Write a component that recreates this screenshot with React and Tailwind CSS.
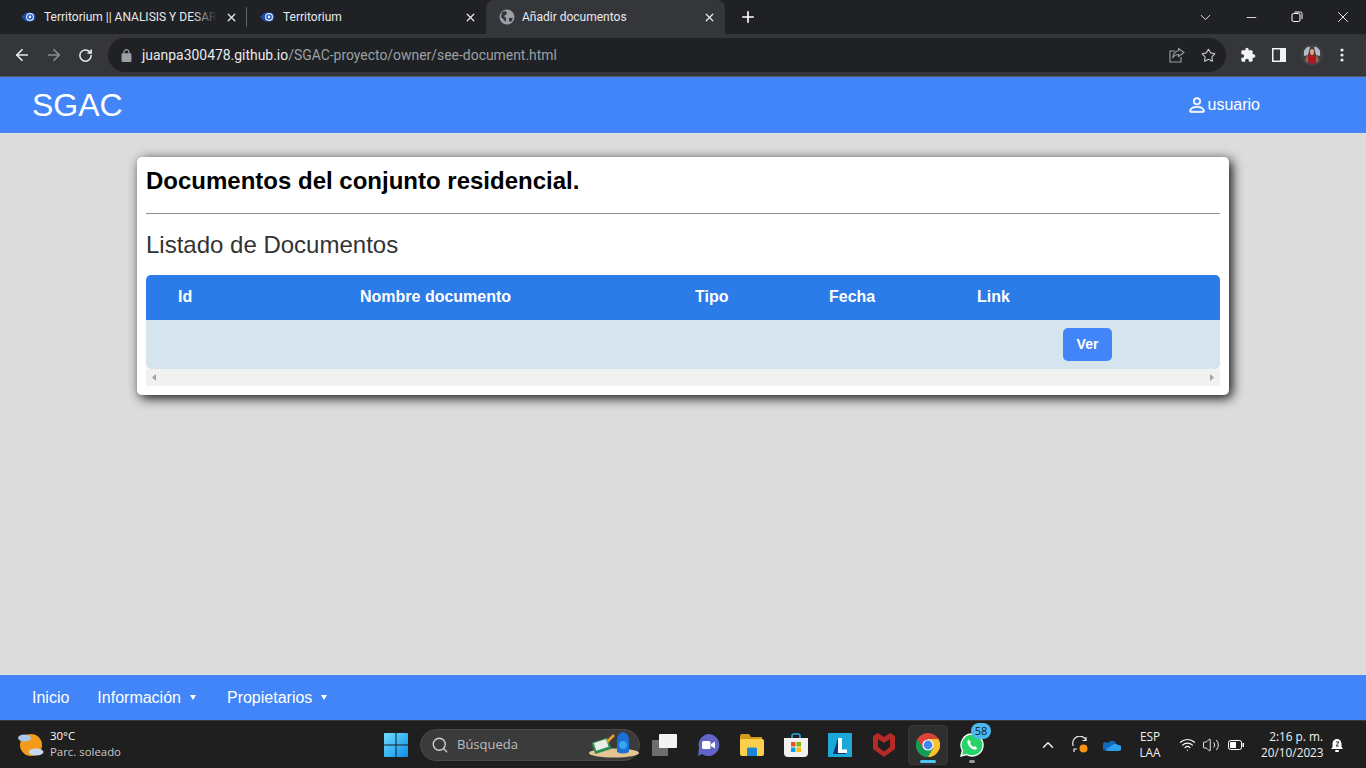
import React from "react";
import { ArrowLeft, ArrowRight, RotateCw, Star, ChevronDown, ChevronUp, Minus, X, Plus, Search, Wifi, Volume2 } from "lucide-react";
import { BsPerson } from "react-icons/bs";

const Favicon = () => (
  <svg width="16" height="16" viewBox="0 0 16 16" className="shrink-0">
    <path d="M0 8 L5 3.5 H10 A4.5 4.5 0 0 1 10 12.5 H5 Z" fill="#1a4fb0" />
    <circle cx="9" cy="8" r="4" fill="#dfeaff" />
    <circle cx="9" cy="8" r="2.8" fill="#1a4fb0" />
    <circle cx="9" cy="8" r="1.4" fill="#dfeaff" />
  </svg>
);

const Globe = () => (
  <svg width="16" height="16" viewBox="0 0 16 16" className="shrink-0">
    <circle cx="8" cy="8" r="7.5" fill="#9aa0a6" />
    <path d="M3 3 L7 2 L8 5 L5 7 L7 9 L7 13 L5 11 L2 8 Z M10 9 L14 9 L12 13 L10 12 Z" fill="#35363a" />
  </svg>
);

const Tab = ({ title, active, icon, fade, divider }) => (
  <div
    className={`relative flex items-center h-[34px] w-[239px] pl-[13px] pr-[9px] ${active ? "bg-[#35363a] rounded-t-lg" : ""}`}
  >
    {icon}
    <span className="relative ml-[7px] flex-1 overflow-hidden whitespace-nowrap text-[12px] text-[#e8eaed]">
      {title}
      {fade && <span className="absolute right-0 top-0 h-full w-6 bg-gradient-to-r from-transparent to-[#202124]" />}
    </span>
    <X size={13} strokeWidth={2.4} className="text-[#e8eaed] ml-2 shrink-0" />
    {divider && <span className="absolute right-0 top-[7px] h-[20px] w-px bg-[#5f6368]" />}
  </div>
);

const TabBar = () => (
  <div className="flex h-[34px] bg-[#202124] pl-[8px]">
    <Tab title="Territorium || ANALISIS Y DESARROLLO" icon={<Favicon />} fade divider />
    <Tab title="Territorium" icon={<Favicon />} />
    <Tab title="Añadir documentos" icon={<Globe />} active />
    <div className="flex items-center ml-[14px]">
      <Plus size={18} strokeWidth={2.2} className="text-white" />
    </div>
    <div className="ml-auto flex items-center text-white">
      <div className="w-[46px] flex justify-center"><ChevronDown size={17} strokeWidth={1.2} /></div>
      <div className="w-[46px] flex justify-center"><Minus size={15} strokeWidth={1.3} /></div>
      <div className="w-[46px] flex justify-center">
        <svg width="12" height="12" viewBox="0 0 12 12" fill="none" stroke="currentColor">
          <rect x="1" y="2.5" width="8" height="8" rx="1.5" />
          <path d="M3.5 1 H9.5 A1.5 1.5 0 0 1 11 2.5 V8" />
        </svg>
      </div>
      <div className="w-[46px] flex justify-center"><X size={18} strokeWidth={1.2} /></div>
    </div>
  </div>
);

const AddressBar = () => (
  <div className="flex items-center h-[42px] bg-[#35363a] border-b border-[#55585c] box-content">
    <div className="w-[108px] flex items-center pl-[13px] gap-[14px] shrink-0">
      <ArrowLeft size={18} strokeWidth={2.3} className="text-[#e8eaed]" />
      <ArrowRight size={18} strokeWidth={2.3} className="text-[#8a8d91]" />
      <RotateCw size={15} strokeWidth={2.4} className="text-[#e8eaed] ml-[1px]" />
    </div>
    <div className="flex items-center h-[34px] w-[1118px] rounded-full bg-[#202124] pl-[13px] pr-[10px]">
      <svg width="11" height="13" viewBox="4 1 16 21" fill="#9aa0a6" className="shrink-0">
        <path d="M18 8h-1V6c0-2.76-2.24-5-5-5S7 3.24 7 6v2H6c-1.1 0-2 .9-2 2v10c0 1.1.9 2 2 2h12c1.1 0 2-.9 2-2V10c0-1.1-.9-2-2-2zM9 6c0-1.66 1.34-3 3-3s3 1.34 3 3v2H9V6z" />
      </svg>
      <span className="ml-[10px] text-[13.93px] text-[#e8eaed] whitespace-nowrap">
        juanpa300478.github.io<span className="text-[#9aa0a6]">/SGAC-proyecto/owner/see-document.html</span>
      </span>
      <div className="ml-auto flex items-center gap-[16px] text-[#c4c7c5]">
        <svg width="16" height="16" viewBox="0 0 16 16" fill="none" stroke="#9aa0a6" strokeWidth="1.1">
          <path d="M6 4 H1 V15 H12 V10" />
          <path d="M9.5 1.5 L15 5.5 L9.5 9.5 V7.5 C7 7.5 5 8.5 3.8 11 C4 7.5 6 4.5 9.5 3.8 Z" />
        </svg>
        <Star size={15} strokeWidth={1.8} />
      </div>
    </div>
    <div className="flex items-center pl-[14px] text-white">
      <svg width="16" height="16" viewBox="0 0 24 24" fill="#f1f3f4">
        <path d="M20.5 11H19V7c0-1.1-.9-2-2-2h-4V3.5C13 2.12 11.88 1 10.5 1S8 2.12 8 3.5V5H4c-1.1 0-1.99.9-1.99 2v3.8H3.5c1.49 0 2.7 1.21 2.7 2.7s-1.21 2.7-2.7 2.7H2V20c0 1.1.9 2 2 2h3.8v-1.5c0-1.49 1.21-2.7 2.7-2.7 1.49 0 2.7 1.21 2.7 2.7V22H17c1.1 0 2-.9 2-2v-4h1.5c1.38 0 2.5-1.12 2.5-2.5S21.88 11 20.5 11z" />
      </svg>
      <svg width="14" height="14" viewBox="0 0 14 14" className="ml-[16px]">
        <rect width="14" height="14" fill="#f1f3f4" />
        <rect x="1.5" y="1.5" width="6.5" height="11" fill="#35363a" />
      </svg>
      <svg width="22" height="22" viewBox="0 0 22 22" className="ml-[15px]">
        <circle cx="11" cy="11" r="11" fill="#3f3f46" />
        <path d="M3 7 Q6 2 9 3 L7 11 L3 12 Z M19 7 Q16 2 13 3 L15 11 L19 12 Z" fill="#b9bcc4" />
        <path d="M7.5 10 L11 12 L14.5 10 L15 17 L11 21 L7 17 Z" fill="#b3141f" />
        <path d="M5 13 L7 11 L7 19 L4 17 Z M17 13 L15 11 L15 19 L18 17 Z" fill="#8a6a4a" />
        <ellipse cx="11" cy="8" rx="2" ry="3" fill="#d9a77f" />
      </svg>
      <svg width="4" height="14" viewBox="0 0 4 14" fill="#e8eaed" className="ml-[17px]">
        <circle cx="2" cy="2" r="1.6" />
        <circle cx="2" cy="7" r="1.6" />
        <circle cx="2" cy="12" r="1.6" />
      </svg>
    </div>
  </div>
);

const Caret = () => (
  <svg width="6" height="5" viewBox="0 0 6 5" fill="white" className="ml-[9px]">
    <path d="M0 0 H6 L3 5 Z" />
  </svg>
);

const DocumentsCard = () => (
  <div className="mx-[137px] mt-[24px] bg-white rounded-[5px] px-[9px] pt-[9px] pb-[9px] shadow-[3px_3px_12px_rgba(0,0,0,0.95)]">
    <h1 className="text-[24px] leading-[30px] font-bold text-black">Documentos del conjunto residencial.</h1>
    <hr className="mt-[17px] border-t border-[#8f8f8f]" />
    <h2 className="mt-[17px] text-[24px] leading-[28px] text-[#333333]">Listado de Documentos</h2>
    <div className="mt-[16px]">
      <div className="grid grid-cols-[182px_335px_134px_148px_1fr] h-[45px] pb-[2px] items-center bg-[#2b7be8] rounded-t-[5px] text-white text-[16px] font-bold">
        <div className="pl-8">Id</div>
        <div className="pl-8">Nombre documento</div>
        <div className="pl-8">Tipo</div>
        <div className="pl-8">Fecha</div>
        <div className="pl-8">Link</div>
      </div>
      <div className="grid grid-cols-[182px_335px_134px_148px_1fr] h-[49px] items-center bg-[#d6e4ee] rounded-b-[5px]">
        <div />
        <div />
        <div />
        <div />
        <div className="pl-[118px]">
          <button className="h-[33px] w-[49px] rounded-[5px] bg-[#4285f8] text-white text-[14px] font-bold">Ver</button>
        </div>
      </div>
      <div className="flex items-center justify-between h-[17px] bg-[#f1f1f1] px-[6px]">
        <svg width="4" height="7" viewBox="0 0 4 7" fill="#a3a3a3"><path d="M4 0 V7 L0 3.5 Z" /></svg>
        <svg width="4" height="7" viewBox="0 0 4 7" fill="#a3a3a3"><path d="M0 0 V7 L4 3.5 Z" /></svg>
      </div>
    </div>
  </div>
);

const Cell = ({ children, className = "" }) => (
  <div className={`w-[44px] h-[40px] flex items-center justify-center shrink-0 ${className}`}>{children}</div>
);

const TaskbarApps = () => (
  <div className="flex items-center">
    <Cell>
      <svg width="24" height="24" viewBox="0 0 24 24">
        <defs>
          <linearGradient id="win" x1="0" y1="0" x2="1" y2="1">
            <stop offset="0" stopColor="#6fdcff" />
            <stop offset="1" stopColor="#0a8fe8" />
          </linearGradient>
        </defs>
        <path d="M0 1 A1 1 0 0 1 1 0 H11.5 V11.5 H0 Z M12.5 0 H23 A1 1 0 0 1 24 1 V11.5 H12.5 Z M0 12.5 H11.5 V24 H1 A1 1 0 0 1 0 23 Z M12.5 12.5 H24 V23 A1 1 0 0 1 23 24 H12.5 Z" fill="url(#win)" />
      </svg>
    </Cell>
    <div className="relative flex items-center w-[220px] h-[32px] ml-[2px] rounded-full bg-[#3b3b3b] pl-[10px] border border-[#4a4a4a]">
      <Search size={18} strokeWidth={1.8} className="text-[#d0d0d0]" />
      <span className="ml-[8px] text-[13px] text-[#bdbdbd] font-['Open_Sans',sans-serif]">Búsqueda</span>
      <svg width="52" height="28" viewBox="0 0 52 28" className="absolute right-0 top-0">
        <ellipse cx="27" cy="23" rx="25" ry="4.5" fill="#e5c592" />
        <rect x="6" y="10" width="17" height="12" rx="1" fill="#2e8b57" transform="rotate(-18 14 16)" />
        <rect x="8" y="11" width="13" height="8" fill="#e6efe6" transform="rotate(-18 14 16)" />
        <path d="M20 12 L27 5" stroke="#f0a030" strokeWidth="2.5" />
        <path d="M30 22 V10 Q30 4 36 2 Q42 4 42 10 V22 Q36 25 30 22 Z" fill="#1a6fd8" />
        <circle cx="36" cy="15" r="4" fill="#35a6f0" />
      </svg>
    </div>
    <Cell className="ml-[3px]">
      <svg width="26" height="22" viewBox="0 0 26 22">
        <rect x="0" y="6" width="16" height="16" rx="1" fill="#6d6d6d" />
        <rect x="7" y="0" width="18" height="14" rx="1" fill="#f3f3f3" />
      </svg>
    </Cell>
    <Cell className="ml-[-1px]">
      <svg width="24" height="24" viewBox="0 0 24 24">
        <path d="M12 1 A11 11 0 1 1 6 21 L2 23 L3 15 A11 11 0 0 1 12 1 Z" fill="#6264c7" />
        <rect x="6" y="8" width="8.5" height="8" rx="1.5" fill="white" />
        <path d="M15 11 L19 8.5 V15.5 L15 13 Z" fill="white" />
      </svg>
    </Cell>
    <Cell>
      <svg width="24" height="22" viewBox="0 0 24 22">
        <path d="M0 2 A2 2 0 0 1 2 0 H9 L11 3 H22 V6 H0 Z" fill="#d49a1a" />
        <path d="M0 5 H22 A2 2 0 0 1 24 7 V20 A2 2 0 0 1 22 22 H2 A2 2 0 0 1 0 20 Z" fill="#fbd04c" />
        <path d="M7 15 A1.5 1.5 0 0 1 8.5 13.5 H15.5 A1.5 1.5 0 0 1 17 15 V22 H7 Z" fill="#1b86d4" />
      </svg>
    </Cell>
    <Cell>
      <svg width="24" height="24" viewBox="0 0 24 24">
        <path d="M8 6 V3 A2 2 0 0 1 10 1 H14 A2 2 0 0 1 16 3 V6" fill="none" stroke="#2ba5e0" strokeWidth="1.6" />
        <path d="M0 5 H24 V20 A4 4 0 0 1 20 24 H4 A4 4 0 0 1 0 20 Z" fill="#f1f1f1" />
        <rect x="7" y="9" width="4.5" height="4.5" fill="#f25022" />
        <rect x="12.5" y="9" width="4.5" height="4.5" fill="#7fba00" />
        <rect x="7" y="14.5" width="4.5" height="4.5" fill="#00a4ef" />
        <rect x="12.5" y="14.5" width="4.5" height="4.5" fill="#ffb900" />
      </svg>
    </Cell>
    <Cell>
      <svg width="24" height="24" viewBox="0 0 24 24">
        <rect width="24" height="24" fill="#1ca9d8" />
        <path d="M5 21 L10 5 V18 H18 V21 Z" fill="#12336e" />
        <path d="M10 5 H14 V16.5 H19 V20 H10 Z" fill="white" />
      </svg>
    </Cell>
    <Cell>
      <svg width="22" height="24" viewBox="0 0 22 24">
        <path d="M0 3 L5 0 L11 4 L17 0 L22 3 V16 L11 24 L0 16 Z M5 6 V14 L11 18.5 L17 14 V6 L11 10 Z" fill="#b52a26" fillRule="evenodd" />
      </svg>
    </Cell>
    <div className="relative w-[40px] h-[40px] mx-[2px] shrink-0 flex items-center justify-center rounded-[4px] bg-[#2f2f2f] border border-[#383838]">
      <svg width="24" height="24" viewBox="0 0 24 24">
        <circle cx="12" cy="12" r="12" fill="#dc4437" />
        <path d="M12 24 A12 12 0 0 0 22.4 6 H12 Z" fill="#fbc02d" />
        <path d="M1.6 6 A12 12 0 0 0 12 24 L17.2 15 H6.8 Z" fill="#0f9d58" />
        <circle cx="12" cy="12" r="5.6" fill="white" />
        <circle cx="12" cy="12" r="4.4" fill="#4285f4" />
      </svg>
      <span className="absolute bottom-[1px] left-[11px] w-[16px] h-[3px] rounded-full bg-[#4fc3f7]" />
    </div>
    <Cell className="relative">
      <svg width="24" height="24" viewBox="0 0 24 24">
        <path d="M12 1 A11 11 0 1 1 6.5 21.5 L1 23 L2.5 17.5 A11 11 0 0 1 12 1 Z" fill="#25d366" stroke="white" strokeWidth="1.4" />
        <path d="M8.5 6.5 C7 8 7 10.5 9.5 13.5 C12.5 17 15.5 17.5 17.5 15.5 L15 13 L13.5 14 C12 13 11 12 10 10.5 L11 9 Z" fill="white" />
      </svg>
      <span className="absolute top-[-2px] left-[21px] w-[20px] h-[16px] rounded-full bg-[#4db8f0] text-[11px] leading-[16px] text-[#10212c] text-center font-['Open_Sans',sans-serif]">58</span>
      <span className="absolute bottom-[2px] left-[19px] w-[6px] h-[3px] rounded-full bg-[#9a9a9a]" />
    </Cell>
  </div>
);

const Tray = () => (
  <div className="ml-auto flex items-center text-white font-['Open_Sans',sans-serif]">
    <ChevronUp size={18} strokeWidth={2} className="text-[#f0f0f0]" />
    <svg width="18" height="18" viewBox="0 0 18 18" fill="none" className="ml-[14px]">
      <path d="M15 4 A7 7 0 0 0 2 9 V10 M3 16 L3 13 L6 13" stroke="#e8e8e8" strokeWidth="1.2" />
      <path d="M15 1 V4.5 H11.5" stroke="#e8e8e8" strokeWidth="1.2" />
      <circle cx="12.5" cy="12.5" r="4" fill="#f7930e" />
    </svg>
    <svg width="18" height="12" viewBox="0 0 18 12" className="ml-[14px]">
      <path d="M5 4 A5 5 0 0 1 13 3.5 L9 8 L0.8 11 A3.5 3.5 0 0 1 5 4 Z" fill="#0f6cbd" />
      <path d="M1.5 11.5 Q5 12 16 12 A3 3 0 0 0 15 6 A4 4 0 0 0 11 5 Z" fill="#2aa0ea" />
    </svg>
    <div className="ml-[18px] w-[22px] text-center text-[11.8px] leading-[15.5px] text-[#f0f0f0]">
      <div>ESP</div>
      <div>LAA</div>
    </div>
    <Wifi size={17} strokeWidth={1.6} className="ml-[18px]" />
    <Volume2 size={18} strokeWidth={1.2} className="ml-[6px]" />
    <svg width="17" height="10" viewBox="0 0 17 10" fill="none" className="ml-[8px]">
      <rect x="0.5" y="0.5" width="13" height="9" rx="2" stroke="white" />
      <rect x="2" y="2" width="6" height="6" fill="white" />
      <rect x="14.5" y="3" width="1.5" height="4" fill="white" />
    </svg>
    <div className="ml-[16px] w-[62px] text-right text-[11.8px] leading-[15.5px] text-[#f0f0f0] whitespace-nowrap">
      <div>2:16 p. m.</div>
      <div>20/10/2023</div>
    </div>
    <svg width="14" height="16" viewBox="0 0 14 16" className="ml-[8px] mr-[21px]" fill="white">
      <path d="M6 2 A4.5 4.5 0 0 1 10.5 6.5 V10 L12 12 H0 L1.5 10 V6.5 A4.5 4.5 0 0 1 6 2 Z" />
      <rect x="4" y="13" width="4" height="2" rx="1" />
      <path d="M5 5 H8 L5 9 H8 M10 1 H13 L10 5 H13" stroke="#1f1f1f" strokeWidth="0.9" fill="none" />
    </svg>
  </div>
);

const Taskbar = () => (
  <div className="flex items-center h-[47px] bg-[#1f1f1f] border-t border-[#3a3a3a] box-content">
    <div className="w-[374px] shrink-0 flex items-center pl-[18px] font-['Open_Sans',sans-serif]">
      <svg width="26" height="26" viewBox="0 0 26 26" className="shrink-0">
        <circle cx="13" cy="13" r="11" fill="#f39a1d" />
        <ellipse cx="6.5" cy="6" rx="6.5" ry="3.5" fill="#a9c6e8" />
        <ellipse cx="18" cy="20" rx="7.5" ry="3.5" fill="#c6d9ef" />
      </svg>
      <div className="ml-[6px] mb-[2px] text-[11.4px] leading-[15.5px]">
        <div className="text-white">30°C</div>
        <div className="text-[#c8c8c8]">Parc. soleado</div>
      </div>
    </div>
    <TaskbarApps />
    <Tray />
  </div>
);

export default function App() {
  return (
    <div className="h-[768px] w-[1366px] overflow-hidden flex flex-col bg-[#dcdcdc] font-['Liberation_Sans',Arial,sans-serif]">
      <div className="font-['Roboto',sans-serif]">
        <TabBar />
        <AddressBar />
      </div>

      <header className="flex items-center justify-between h-[56px] bg-[#4285f8] pl-[32px] pr-[106px] text-white shrink-0">
        <span className="text-[32px] mb-px">SGAC</span>
        <span className="flex items-center text-[16px]">
          <BsPerson size={20} className="mr-[1px] stroke-[0.5px]" />
          usuario
        </span>
      </header>

      <main className="flex-1">
        <DocumentsCard />
      </main>

      <nav className="flex items-center h-[45px] bg-[#4285f8] pl-[32px] text-white text-[16px] shrink-0">
        <span>Inicio</span>
        <span className="flex items-center ml-[28px]">Información<Caret /></span>
        <span className="flex items-center ml-[31px]">Propietarios<Caret /></span>
      </nav>

      <Taskbar />
    </div>
  );
}
